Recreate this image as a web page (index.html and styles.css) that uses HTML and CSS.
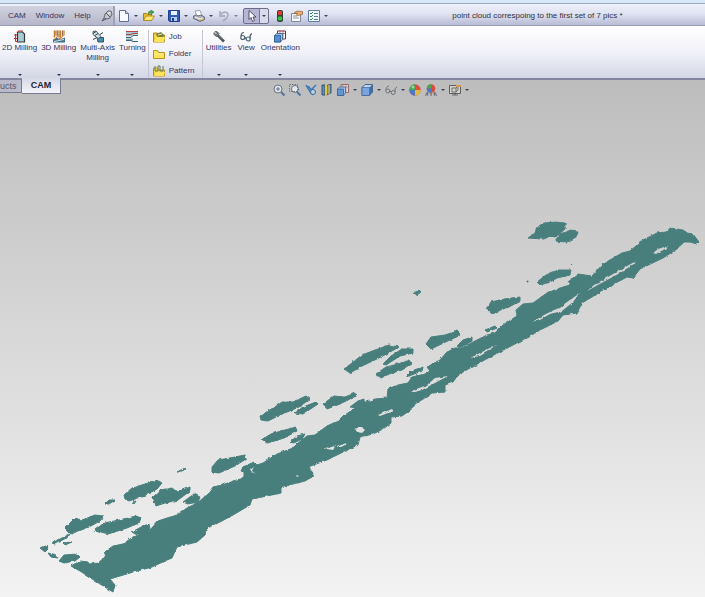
FILE: index.html
```html
<!DOCTYPE html>
<html lang="en">
<head>
<meta charset="utf-8">
<title>point cloud correspoing to the first set of 7 pics *</title>
<link rel="stylesheet" href="styles.css">
</head>
<body>
<header class="titlebar">
  <nav class="menu">
    <a href="#">CAM</a><a href="#">Window</a><a href="#">Help</a>
    <button class="tool" aria-label="Pin menu"><svg viewBox="0 0 12 12"><path d="M4 4 7 1h3l1 3-2 4-3 1-3-1z" fill="#c7c7cf" stroke="#666876"/><path d="M5 3l4 4M3 8l-2 3 4-2" fill="none" stroke="#555764"/><path d="M7 4l2-2" stroke="#fff"/></svg></button>
  </nav>
  <div class="tools">
    <button class="tool drop" aria-label="New"><svg viewBox="0 0 12 12"><path d="M1.500.5h6l3 3v8h-9z" fill="#f8fbff" stroke="#62718f"/><path d="M7.500.5v3h3" fill="#c4d2e8" stroke="#62718f"/></svg></button>
    <button class="tool drop" aria-label="Open"><svg viewBox="0 0 12 12"><path d="M.5 10.500v-7h3l1 1h4v6z" fill="#e9bd35" stroke="#a77e18"/><path d="M.5 10.500 3 6h8.500l-3 4.500z" fill="#ffe679" stroke="#b58c20"/><path d="M5 4c0-2 1-3 3-3V0l3 2-3 2.500V3C7 3 6 3 5 4z" fill="#45a43b" stroke="#26742a" stroke-width=".5"/></svg></button>
    <button class="tool drop" aria-label="Save"><svg viewBox="0 0 12 12"><path d="M.5.5h11v11h-10l-1-1z" fill="#315cb8" stroke="#203f89"/><path d="M3 1h6v4H3z" fill="#e9f0fc"/><path d="M3 7h6v4H3z" fill="#b7c9e7"/><path d="M4 8h2v3H4z" fill="#203f89"/></svg></button>
    <button class="tool drop" aria-label="Print"><svg viewBox="0 0 12 12"><path d="m2 1 5-.5 2 5-5 1z" fill="#fff" stroke="#728098" stroke-width=".7"/><path d="m.5 6 3-1 1.500 1 3-1 3.500 2v2.500L7 11.500.5 8.500z" fill="#aeb2bf" stroke="#535967" stroke-width=".8"/><path d="m2 7 5 2 3-1" stroke="#fff" fill="none"/><path d="m7 10 3-1" stroke="#e3bd2b"/></svg></button>
    <button class="tool drop faded" aria-label="Undo"><svg viewBox="0 0 12 12"><path d="M2 1v5h5M2 6c2-5 8-5 8-1 0 2-2 4-5 6" fill="none" stroke="#8d91a2" stroke-width="1.800"/></svg></button>
    <button class="tool drop picked" aria-label="Select"><svg viewBox="0 0 12 12"><path d="M3 .5v9l2-2 1.500 4 2-1L7 7h3z" fill="#fff" stroke="#3e4259" stroke-width=".9"/></svg></button>
    <button class="tool" aria-label="Rebuild"><svg viewBox="0 0 12 12"><rect x="3" width="6" height="12" rx="2" fill="#354038"/><circle cx="6" cy="3" r="2.200" fill="#e83a32"/><circle cx="6" cy="8.500" r="2.300" fill="#35c245"/></svg></button>
    <button class="tool" aria-label="File properties"><svg viewBox="0 0 12 12"><path d="M.5 3.500h9v8h-9z" fill="#f8f8fa" stroke="#81869a"/><path d="M2 6h4M2 8h6" stroke="#9094a2"/><path d="M3 3 6 1l5.500.5v3l-3 .5-2 1-1-1 1-1.500z" fill="#e6ae72" stroke="#99622f" stroke-width=".7"/></svg></button>
    <button class="tool drop" aria-label="Options"><svg viewBox="0 0 12 12"><path d="M.5.5h11v11H.5z" fill="#eff7fb" stroke="#5e7da0"/><path d="m2 3 1 1 2-2M2 6l1 1 2-2M2 9l1 1 2-2" fill="none" stroke="#348556"/><path d="M6 3.500h4M6 6.500h4M6 9.500h4" stroke="#557fa7"/></svg></button>
  </div>
  <h1 class="title">point cloud correspoing to the first set of 7 pics *</h1>
</header>

<section class="ribbon" aria-label="CAM commands">
  <button class="command"><svg viewBox="0 0 12 12"><path d="M3.500 1.500h5l2 2v8h-7z" fill="#aacbd2" stroke="#30383e" stroke-width="1.200"/><path d="M4 .5h5M1.500 3.500V11H4M0 4.500h3M0 8h3" fill="none" stroke="#cb3227"/></svg><span>2D Milling</span></button>
  <button class="command"><svg viewBox="0 0 12 12"><path d="M0 9 4 7l3 2 5-2v5H0z" fill="#416f89"/><path d="M0 0h12v5L7 8 0 7z" fill="#ecd9b4"/><path d="M1.500 0v7M4.500 0v6l-3 3M7.500 0v7l-2 2M11 0v4L7 9" fill="none" stroke="#cc7e27"/><path d="M3 0v5M6 0v7M9.500 0v5" stroke="#713b2c" stroke-width=".7"/><path d="m1 11 5-1 5-1" fill="none" stroke="#d9e6e8"/></svg><span>3D Milling</span></button>
  <button class="command"><svg viewBox="0 0 12 12"><path d="M5 7h6.500v4.500H6z" fill="#468da5" stroke="#395461"/><path d="m1 1 3-.5L9 6 6 8 1 4z" fill="#d3e1e4" stroke="#4e6069"/><path d="m1 3 3-2M3 5l3-2M8 4l3-2M1 9l4-2" stroke="#35464e"/></svg><span>Multi-Axis<br>Milling</span></button>
  <button class="command"><svg viewBox="0 0 12 12"><path d="M0 1h12v3H8L6 6H0z" fill="#9fc8d1"/><path d="M0 1h12M0 4h5l2-1h5" fill="none" stroke="#bc403b"/><path d="M0 8h7v2H0z" fill="#89a5ad"/><path d="M0 7h5l2-2h5M0 10h5l2 1h5" fill="none" stroke="#376476"/></svg><span>Turning</span></button>
  <div class="joblist">
    <button class="job"><svg viewBox="0 0 12 12"><path d="M.5 11V2h4l1 2h6v7z" fill="#f0cf3d" stroke="#a98a20"/><path d="m3 3 5-2 3 3-1 3H5z" fill="#77803f"/><path d="m1 11 2-5h9l-1 5z" fill="#ffe15a"/><path d="m5 4 4-1" stroke="#eceab2"/></svg>Job</button>
    <button class="job"><svg viewBox="0 0 12 12"><path d="M.5 10.500v-8h4l1 2h6v6z" fill="#ffe15a" stroke="#b8941d"/><path d="M2 6h8" stroke="#fff1a2"/></svg>Folder</button>
    <button class="job"><svg viewBox="0 0 12 12"><path d="M.5 11V3h4l1 2h6v6z" fill="#f5d344" stroke="#b8941d"/><path d="M2 1v5h3V1h2v5h3V1" fill="none" stroke="#697b61"/><path d="m1 11 2-4h9l-1 4z" fill="#ffe15a"/></svg>Pattern</button>
  </div>
  <button class="command"><svg viewBox="0 0 12 12"><path d="m4 4 7 7" stroke="#4e5355" stroke-width="2.600"/><path d="M1 2v2l2 2 2-1 1-2-2-2H2l2 2-1 1z" fill="#777e80" stroke="#4e5355" stroke-width=".7"/><path d="m5 4 5 5" stroke="#afb6b7" stroke-width=".6"/></svg><span>Utilities</span></button>
  <button class="command"><svg viewBox="0 0 12 12"><g fill="none" stroke="#4b6372" stroke-width="1.200"><circle cx="2.800" cy="7" r="2"/><circle cx="8.200" cy="8.500" r="2"/><path d="M1 6c0-2 1-4 3-4M5 7l1 1M10 8c0-3 0-4 2-5"/></g></svg><span>View</span></button>
  <button class="command"><svg viewBox="0 0 12 12"><path d="M3.500.5h8v8h-8z" fill="#fff" stroke="#7b2f35"/><path d="M6 0v8M9 0v8M3 3h8" stroke="#a7444a" stroke-width=".7"/><path d="m.5 5 2-2h6v6l-2 2.500h-6z" fill="#9ec5f2" stroke="#235184" stroke-width=".7"/><path d="M.5 5h6v6.500h-6z" fill="#548fd5" stroke="#235184" stroke-width=".7"/></svg><span>Orientation</span></button>
</section>

<main class="viewport">
  <div class="viewhead">
    <nav class="tabs"><a href="#">ucts</a><a href="#" class="current">CAM</a></nav>
    <div class="viewtools">
      <button class="tool" aria-label="Zoom to fit"><svg viewBox="0 0 12 12"><path d="m8 8 3.500 3.500" stroke="#5376a4" stroke-width="2"/><circle cx="5" cy="5" r="4" fill="#dce5ec" stroke="#6b7585"/><path d="M5 3v4M3 5h4" stroke="#56616f" stroke-width=".8" fill="none"/></svg></button>
      <button class="tool" aria-label="Zoom to area"><svg viewBox="0 0 12 12"><path d="m8 8 3.500 3.500" stroke="#5376a4" stroke-width="2"/><circle cx="6" cy="5" r="3.500" fill="#e4e9ed" stroke="#6b7585"/><path d="M.5.5h8v7h-8z" fill="none" stroke="#59616d" stroke-width=".8" stroke-dasharray="1.500 1"/></svg></button>
      <button class="tool" aria-label="Previous view"><svg viewBox="0 0 12 12"><path d="m1 2 3 1 2 3 5-5M5 8l3 3M1 1l4 7" fill="none" stroke="#3e79ba" stroke-width="1.500"/><circle cx="8" cy="8" r="2.500" fill="#b9d5ed" stroke="#3f6592"/></svg></button>
      <button class="tool" aria-label="Section view"><svg viewBox="0 0 12 12"><path d="M1 1h3v10H1zM5 2l5-2v9l-5 2z" fill="#648bb9" stroke="#38516e"/><path d="M4 1h2v10H4z" fill="#e3c539"/><path d="M8 1v9" stroke="#e3c539"/></svg></button>
      <button class="tool drop" aria-label="View orientation"><svg viewBox="0 0 12 12"><path d="M4 .5h7.500v8H4z" fill="#ddd" stroke="#865353" stroke-width=".8"/><path d="M6 1v7M9 1v7M4 3h7" stroke="#a16c6c" stroke-width=".6"/><path d="m.5 5 2-2h6v6l-2 2.500h-6z" fill="#a4c5ea" stroke="#365b87" stroke-width=".7"/><path d="M.5 5h6v6.500h-6z" fill="#6395ce" stroke="#365b87" stroke-width=".7"/></svg></button>
      <button class="tool drop" aria-label="Display style"><svg viewBox="0 0 12 12"><path d="m1 3.500 3-3h7.500V8l-3 3.500H1z" fill="#b9d5f4" stroke="#48638b"/><path d="M1 3.500h7.500v8H1z" fill="#79a5df" stroke="#48638b" stroke-width=".7"/><path d="m8.500 3.500 3-3V8l-3 3.500z" fill="#416ca5"/></svg></button>
      <button class="tool drop" aria-label="Hide or show items"><svg viewBox="0 0 12 12"><g fill="none" stroke="#6c7379"><circle cx="2.800" cy="7" r="2"/><circle cx="8.200" cy="8.500" r="2"/><path d="M1 6c0-2 1-4 3-4M5 7l1 1M10 8c0-3 0-4 2-5"/></g></svg></button>
      <button class="tool" aria-label="Edit appearance"><svg viewBox="0 0 12 12"><circle cx="6" cy="6" r="5.700" fill="#df4d3d"/><path d="M6 6V.3A5.700 5.700 0 0 0 .3 6z" fill="#46a853"/><path d="M6 6v5.700A5.700 5.700 0 0 0 11.700 6z" fill="#e2bb3b"/><path d="M6 6v5.700A5.700 5.700 0 0 1 .3 6z" fill="#4c78c4"/><circle cx="4" cy="3" r="1.500" fill="#fff" opacity=".5"/></svg></button>
      <button class="tool drop" aria-label="Apply scene"><svg viewBox="0 0 12 12"><path d="m0 12 2-4h8l2 4z" fill="#ededed" stroke="#555" stroke-width=".6"/><path d="m3 8-1 4M6 8v4M9 8l1 4M1 10h10" stroke="#444" stroke-width=".7"/><circle cx="6" cy="4.500" r="4.300" fill="#d84b3d"/><path d="M6 4.500V.2a4.300 4.300 0 0 0-4.300 4.300z" fill="#46a853"/><path d="M6 4.500H1.700A4.300 4.300 0 0 0 6 8.800z" fill="#4c78c4"/></svg></button>
      <button class="tool drop" aria-label="View settings"><svg viewBox="0 0 12 12"><path d="M.5 1.500h11v8H.5z" fill="#d5d2c9" stroke="#5e5e62"/><path d="M3 11h6M6 9v2M3 4h4v4H3zM7 4l2-2v4L7 8" fill="none" stroke="#54565b" stroke-width=".8"/><path d="M7 1h5v2H7z" fill="#d99a4e"/></svg></button>
    </div>
  </div>
  <svg class="cloud" viewBox="0 97 705 500" role="img" aria-label="Point cloud">
    <defs>
      <filter id="rough" x="0" y="97" width="705" height="500" filterUnits="userSpaceOnUse" color-interpolation-filters="sRGB">
        <feTurbulence type="fractalNoise" baseFrequency=".2" numOctaves="2" seed="4" result="noise"/>
        <feDisplacementMap in="SourceGraphic" in2="noise" scale="3" xChannelSelector="R" yChannelSelector="G"/>
      </filter>
      <mask id="gaps" x="0" y="97" width="705" height="500" maskUnits="userSpaceOnUse">
        <path d="M0 97h705v500H0z" fill="#fff"/>
        <path d="M667 246 665 249 656 254 653 253 658 249ZM636 261 620 270 594 285 587 291 596 286 620 273 634 264ZM580 293 567 302 560 308 554 310 544 315 534 321 533 322 540 320 550 314 562 311 573 302ZM496 345 480 353 470 358 480 356 493 348ZM448 376 435 378 427 385 414 390 410 393 422 390 433 384ZM392 409 378 415 380 416 393 411ZM354 429 361 427 365 430 362 433 357 430ZM323 447 330 448 336 445 333 450 327 449ZM337 447 345 443 347 444 341 447ZM250 469 254 466 252 471 256 474 252 472ZM296 475 299 476 297 477Z"/>
      </mask>
    </defs>
    <g filter="url(#rough)">
      <path class="points" mask="url(#gaps)" d="M71 566 80 561 88 562 89 564 98 563 105 557 106 551 113 546 123 544 130 539 138 535 150 530 158 521 167 518 177 515 187 508 197 503 207 495 213 487 222 485 233 481 244 478 244 472 241 471 243 467 254 462 257 465 263 463 277 454 293 448 298 443 307 436 315 435 327 426 340 420 345 415 355 408 363 403 375 399 387 398 388 389 398 385 408 383 412 377 425 374 430 371 427 367 440 360 447 352 455 348 462 348 473 342 487 335 495 333 503 325 517 316 516 310 523 304 533 303 547 293 560 288 570 285 568 282 578 274 592 276 603 264 622 253 630 251 643 240 657 233 667 232 670 228 683 230 687 233 693 234 699 242 697 244 690 242 683 242 677 249 663 258 640 269 633 278 627 277 610 286 597 294 582 303 577 313 563 315 558 321 540 330 530 336 513 345 490 357 470 368 458 375 453 382 445 385 445 392 433 393 415 404 413 408 402 416 391 417 391 423 383 429 373 434 360 437 358 445 347 450 335 456 327 460 308 467 313 473 312 477 305 481 281 487 281 493 267 496 252 499 250 505 233 515 220 522 207 527 205 535 197 542 177 547 172 558 167 560 152 567 130 573 110 579 115 585 113 592 100 584 80 571Z"/>
      <path class="points" d="M528 238 534 234 537 227 544 223 555 222 565 223 565 229 558 235 543 239ZM555 241 560 234 571 230 578 231 576 237 567 242ZM537 282 546 275 558 270 571 270 570 275 557 278 550 282 540 285ZM486 309 491 302 504 299 520 297 520 301 509 307 492 313ZM485 330 495 326 497 328 487 332ZM426 344 431 337 445 335 457 331 461 335 452 339 431 349ZM457 346 463 340 472 337 472 341 460 348ZM344 369 352 363 362 355 375 350 389 345 399 347 381 357 362 366 350 373ZM383 364 391 356 402 349 413 349 413 353 400 356 386 365ZM376 374 386 367 398 364 409 360 412 364 402 370 389 374 381 378ZM406 376 411 371 423 367 422 371 409 376ZM260 416 268 411 278 405 282 402 293 402 306 396 310 399 299 407 280 415 268 421 261 420ZM295 413 303 407 316 402 318 404 303 414ZM323 404 334 396 345 397 355 393 356 396 340 404 327 409ZM350 407 358 401 364 399 364 403 354 408ZM261 440 271 434 281 431 296 427 297 431 284 438 268 443ZM290 442 297 436 305 434 302 439 294 443ZM212 467 218 460 230 458 245 455 246 459 235 466 219 473 212 472ZM124 495 132 488 145 484 159 481 162 483 157 489 144 496 129 501 125 499ZM153 497 161 490 172 488 177 492 190 487 190 491 178 500 165 503 156 506ZM183 502 194 494 200 497 198 502 188 504ZM65 528 75 518 82 520 95 515 104 516 100 521 89 527 71 534ZM95 530 104 523 119 520 136 516 141 518 139 523 127 528 108 534ZM132 532 143 526 149 524 150 529 144 534 135 534ZM59 561 64 555 77 554 80 557 75 561 64 563ZM40 548 46 546 48 549 45 552ZM48 553 56 555 58 558 51 557ZM105 504 109 500 115 500 109 504ZM177 472 185 468 186 469 178 472ZM414 293 419 290 421 292 417 295ZM52 543 70 534 68 537 55 544ZM64 543 72 542 65 545ZM571 263h1v1h-1ZM527 281h1v1h-1ZM133 502 136 501 134 504Z"/>
    </g>
  </svg>
</main>
</body>
</html>
```

FILE: styles.css
```css
* { box-sizing: border-box; }

body {
  margin: 0;
  min-height: 100vh;
  display: flex;
  flex-direction: column;
  font: 8px/10px "Liberation Sans", Arial, sans-serif;
  color: #36345c;
}

a { color: inherit; text-decoration: none; }

button {
  border: 0;
  padding: 0;
  background: none;
  font: inherit;
  color: inherit;
}

svg { display: block; flex-shrink: 0; }

.titlebar {
  display: flex;
  align-items: center;
  height: 26px;
  padding-top: 3px;
  border-top: 3px solid #d8e8f6;
  border-bottom: 1px solid #9a9cae;
  background: linear-gradient(#98a9c2 1px, #eef0fa 1px, #dfe2f1 50%, #b8bcd5);
}

.menu {
  display: flex;
  align-items: center;
  gap: 10px;
  height: 100%;
  width: 115px;
  padding-left: 8px;
  border-right: 2px solid #a0a2b2;
  background: linear-gradient(#d2d3e1, #b4b6c9);
}

.tools {
  display: flex;
  align-items: center;
  gap: 5px;
  padding-left: 3px;
}

.tool {
  display: flex;
  align-items: center;
  gap: 4px;
  height: 16px;
}

.tool svg { width: 12px; height: 12px; }

.drop::after {
  content: "";
  border: 2px solid transparent;
  border-top-color: #404257;
  border-bottom: 0;
}

.faded { opacity: .6; }

.picked {
  padding: 0 2px;
  border: 1px solid #6d6c8b;
  border-radius: 2px;
  background: linear-gradient(90deg, #b7b5d5 15px, #77769a 15px, #77769a 16px, #d9daea 16px);
}

.title {
  flex: 1;
  margin: 0;
  padding-left: 42px;
  text-align: center;
  font: inherit;
  color: #303040;
}

.ribbon {
  display: flex;
  height: 54px;
  padding-top: 4px;
  border-bottom: 2px solid #83869c;
  background: linear-gradient(#fff, #f1f2f9 50%, #d3d6e5);
}

.command {
  display: flex;
  flex-direction: column;
  align-items: center;
  height: 46px;
  padding: 0 2px;
}

.joblist ~ .command { padding: 0 3px; }

.command svg { width: 12px; height: 13px; }

.command::after {
  content: "";
  margin-top: auto;
  border: 2px solid transparent;
  border-top-color: #30324a;
  border-bottom: 0;
}

.joblist {
  display: flex;
  flex-direction: column;
  justify-content: space-between;
  width: 55px;
  padding-left: 4px;
  border: solid #c4c6d4;
  border-width: 0 1px;
}

.job {
  display: flex;
  align-items: center;
  gap: 4px;
  height: 14px;
}

.job svg { width: 12px; height: 12px; }

.viewport {
  flex: 1;
  background: linear-gradient(#bdbdbd, #f3f3f3);
}

.viewhead {
  display: flex;
  gap: 212px;
  height: 17px;
}

.tabs {
  display: flex;
  align-items: flex-start;
  font: 9px/13px "Liberation Sans", sans-serif;
}

.tabs a {
  height: 13px;
  width: 22px;
  border: solid #777b91;
  border-width: 0 1px 1px 0;
  background: #b9bbcb;
  color: #55576b;
}

.tabs .current {
  height: 16px;
  width: 39px;
  margin-top: -2px;
  padding-top: 1px;
  background: linear-gradient(#d5d8e6, #f4f5fa);
  color: #222433;
  font-weight: bold;
  text-align: center;
}

.viewtools {
  display: flex;
  align-items: center;
  gap: 4px;
  padding-top: 2px;
}

.cloud { width: 100%; }
.points { fill: #487f7d; stroke: #487f7d; stroke-width: 1; stroke-linejoin: round; }
```
